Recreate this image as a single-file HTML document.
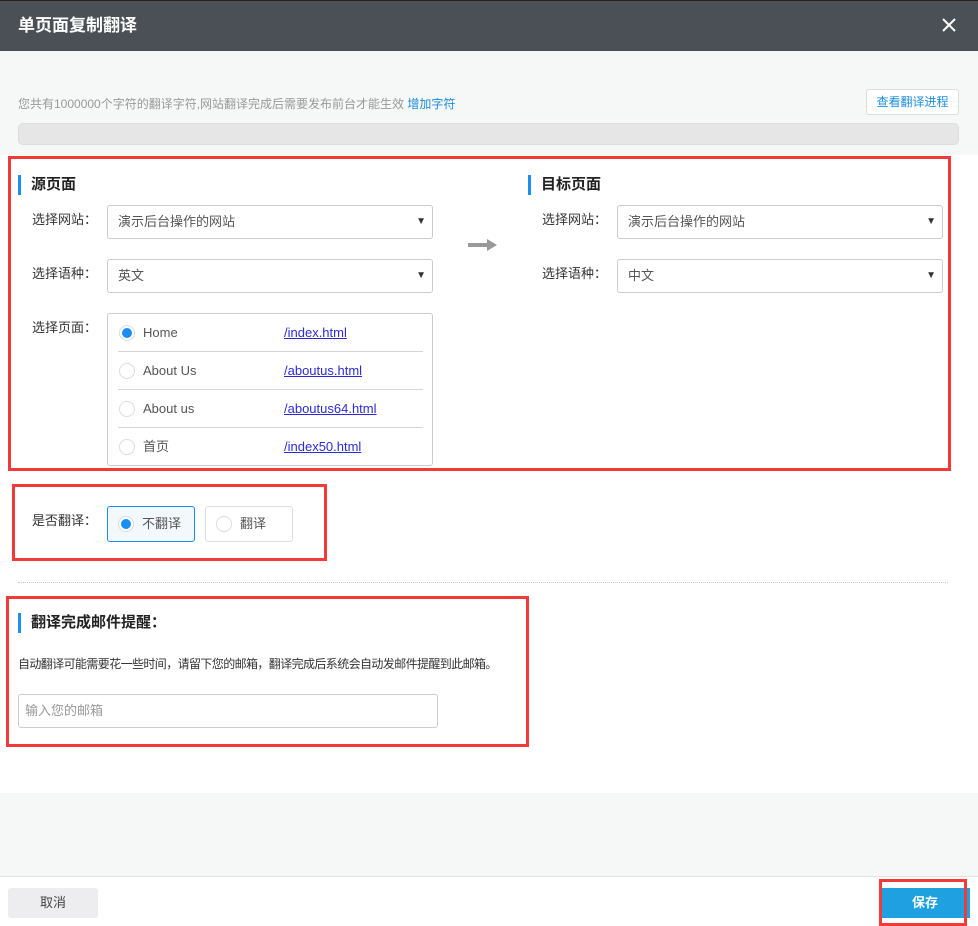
<!DOCTYPE html>
<html><head><meta charset="utf-8"><style>
*{margin:0;padding:0;box-sizing:border-box}
body{width:978px;height:926px;position:relative;background:#fff;font-family:"Liberation Sans","Noto Sans CJK SC",sans-serif;font-size:13px;color:#333;overflow:hidden}
.a{position:absolute}
.hdr{left:0;top:0;width:978px;height:51px;background:#4b4f56;color:#fff;font-size:17px;font-weight:bold;padding:0 0 0 18px;line-height:50px;border-top:1px solid #222}
.sel{position:absolute;height:34px;border:1px solid #ccc;border-radius:3px;background:#fff;padding:0 10px;line-height:32px;color:#555;font-size:13px}
.sel:after{content:"▼";position:absolute;right:6px;top:0;line-height:28px;font-size:10px;color:#333;top:2px}
.lbl{position:absolute;font-size:13px;color:#333;line-height:20px}
.ttl{position:absolute;font-size:15px;font-weight:bold;color:#222;border-left:3px solid #1a8ef5;padding-left:10px;line-height:20px}
.red{position:absolute;border:3px solid #f23a3a}
.rad{position:absolute;width:16px;height:16px;border-radius:50%;border:1px solid #d8dce0;background:#fff}
.rad.on:after{content:"";position:absolute;left:2px;top:2px;width:10px;height:10px;border-radius:50%;background:#1a8ef5}
.row{position:absolute;left:10px;width:305px;height:38px;border-bottom:1px solid #d5d5d5}
.row span{position:absolute;top:0;line-height:38px;color:#555}
.row a{position:absolute;left:166px;top:0;line-height:38px;color:#2b2bd8;text-decoration:underline}
.opt span{position:absolute;left:34px;top:0;line-height:34px;color:#555}
</style></head><body>
<div class="a hdr">单页面复制翻译</div>
<svg class="a" style="left:942px;top:18px" width="14" height="14" viewBox="0 0 14 14"><path d="M1 1L13 13M13 1L1 13" stroke="#fff" stroke-width="2"/></svg>
<div class="a" style="left:0;top:51px;width:978px;height:104px;background:#f6f7f7"></div>
<div class="a" style="left:18px;top:96px;font-size:12px;color:#999;line-height:16px">您共有1000000个字符的翻译字符,网站翻译完成后需要发布前台才能生效 <span style="color:#1a8ee0">增加字符</span></div>
<div class="a" style="left:866px;top:89px;width:93px;height:26px;border:1px solid #ddd;border-radius:3px;background:#fff;color:#1a8ee0;font-size:12px;text-align:center;line-height:24px">查看翻译进程</div>
<div class="a" style="left:18px;top:123px;width:941px;height:22px;background:#e6e6e6;border:1px solid #ddd;border-radius:5px"></div>

<div class="red" style="left:8px;top:156px;width:943px;height:315px"></div>
<div class="ttl" style="left:18px;top:175px">源页面</div>
<div class="lbl" style="left:32px;top:210px">选择网站：</div>
<div class="sel" style="left:107px;top:205px;width:326px">演示后台操作的网站</div>
<div class="lbl" style="left:32px;top:264px">选择语种：</div>
<div class="sel" style="left:107px;top:259px;width:326px">英文</div>
<div class="lbl" style="left:32px;top:318px">选择页面：</div>
<div class="a" style="left:107px;top:313px;width:326px;height:153px;border:1px solid #ccc;border-radius:3px">
 <div class="row" style="top:0"><div class="rad on" style="left:1px;top:11px"></div><span style="left:25px">Home</span><a>/index.html</a></div>
 <div class="row" style="top:38px"><div class="rad" style="left:1px;top:11px"></div><span style="left:25px">About Us</span><a>/aboutus.html</a></div>
 <div class="row" style="top:76px"><div class="rad" style="left:1px;top:11px"></div><span style="left:25px">About us</span><a>/aboutus64.html</a></div>
 <div class="row" style="top:114px;border:none"><div class="rad" style="left:1px;top:11px"></div><span style="left:25px">首页</span><a>/index50.html</a></div>
</div>
<div class="a" style="left:468px;top:243px;width:21px;height:4px;background:#999"></div>
<div class="a" style="left:487px;top:239px;width:0;height:0;border-left:10px solid #999;border-top:6px solid transparent;border-bottom:6px solid transparent"></div>
<div class="ttl" style="left:528px;top:175px">目标页面</div>
<div class="lbl" style="left:542px;top:210px">选择网站：</div>
<div class="sel" style="left:617px;top:205px;width:326px">演示后台操作的网站</div>
<div class="lbl" style="left:542px;top:264px">选择语种：</div>
<div class="sel" style="left:617px;top:259px;width:326px">中文</div>

<div class="red" style="left:12px;top:484px;width:315px;height:77px"></div>
<div class="lbl" style="left:32px;top:511px">是否翻译：</div>
<div class="a opt" style="left:107px;top:506px;width:88px;height:36px;border:1px solid #1a8ef5;border-radius:3px;background:#f3f8fd"><div class="rad on" style="left:10px;top:9px"></div><span>不翻译</span></div>
<div class="a opt" style="left:205px;top:506px;width:88px;height:36px;border:1px solid #ddd;border-radius:3px"><div class="rad" style="left:10px;top:9px"></div><span>翻译</span></div>
<div class="a" style="left:18px;top:582px;width:930px;border-top:1px dotted #ccc"></div>

<div class="red" style="left:6px;top:596px;width:523px;height:151px"></div>
<div class="ttl" style="left:18px;top:613px">翻译完成邮件提醒：</div>
<div class="a" style="left:18px;top:655px;font-size:12px;color:#333;letter-spacing:-0.6px;line-height:18px">自动翻译可能需要花一些时间，请留下您的邮箱，翻译完成后系统会自动发邮件提醒到此邮箱。</div>
<div class="a" style="left:18px;top:694px;width:420px;height:34px;border:1px solid #ccc;border-radius:3px;padding:0 6px;line-height:32px;color:#999">输入您的邮箱</div>

<div class="a" style="left:0;top:793px;width:978px;height:84px;background:#f6f7f7;border-bottom:1px solid #e2e2e2"></div>
<div class="a" style="left:8px;top:888px;width:90px;height:30px;background:#ededf0;border-radius:3px;text-align:center;line-height:30px;color:#444">取消</div>
<div class="a" style="left:880px;top:888px;width:90px;height:30px;background:#1fa0e0;text-align:center;line-height:30px;color:#fff;font-weight:bold">保存</div>
<div class="red" style="left:879px;top:879px;width:88px;height:47px"></div>
</body></html>
